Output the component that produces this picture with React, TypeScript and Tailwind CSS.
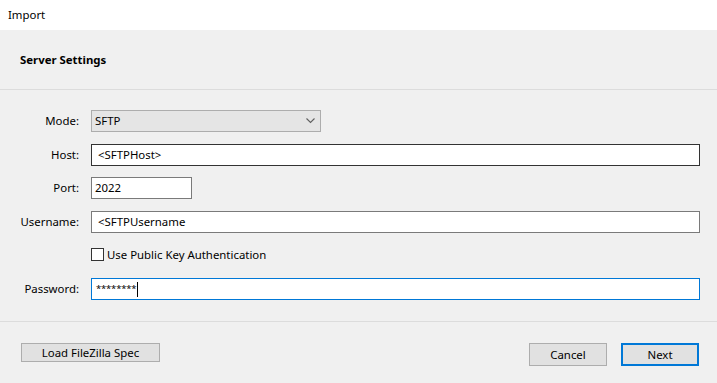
import { FC } from "react";

const font = { fontFamily: '"Segoe UI", "Noto Sans", "Open Sans", sans-serif' };

const Label: FC<{ text: string }> = ({ text }) => (
  <div className="w-[80px] pr-[1px] text-right text-black">{text}</div>
);

const App: FC = () => {
  return (
    <div className="w-[717px] h-[383px] bg-[#f0f0f0] text-[11.4px] text-black overflow-hidden" style={font}>
      {/* title bar */}
      <div className="h-[30px] bg-white flex items-center pl-[8px]">Import</div>

      {/* header */}
      <div className="h-[60px] flex items-center pl-[20px] border-b border-[#dcdcdc] font-bold">
        Server Settings
      </div>

      {/* form */}
      <div className="h-[232px] border-b border-[#dcdcdc] pt-[20px] pr-[17px]">
        <div className="flex items-center gap-[11px] h-[22px]">
          <Label text="Mode:" />
          <div className="w-[230px] h-[22px] bg-[#e5e5e5] border border-[#adadad] flex items-center justify-between pl-[3px] pr-[5px]">
            <span>SFTP</span>
            <svg width="9" height="6" viewBox="0 0 9 6">
              <path d="M0.5 0.5 L4.5 4.5 L8.5 0.5" fill="none" stroke="#606060" strokeWidth="1.1" />
            </svg>
          </div>
        </div>
        <div className="flex items-center gap-[11px] h-[22px] mt-[12px]">
          <Label text="Host:" />
          <div className="flex-1 h-[22px] bg-white border border-[#333] flex items-center pl-[6px]">&lt;SFTPHost&gt;</div>
        </div>
        <div className="flex items-center gap-[11px] h-[22px] mt-[11px]">
          <Label text="Port:" />
          <div className="w-[101px] h-[22px] bg-white border border-[#7a7a7a] flex items-center pl-[3px]">2022</div>
        </div>
        <div className="flex items-center gap-[11px] h-[22px] mt-[12px]">
          <Label text="Username:" />
          <div className="flex-1 h-[22px] bg-white border border-[#7a7a7a] flex items-center pl-[6px]">&lt;SFTPUsername</div>
        </div>
        <div className="flex items-center gap-[11px] h-[20px] mt-[12px]">
          <div className="w-[80px]" />
          <div className="flex items-center gap-[3px]">
            <div className="w-[13px] h-[13px] bg-white border border-[#333]" />
            <span>Use Public Key Authentication</span>
          </div>
        </div>
        <div className="flex items-center gap-[11px] h-[22px] mt-[13px]">
          <Label text="Password:" />
          <div className="flex-1 h-[22px] bg-white border border-[#0078d7] flex items-center pl-[4px]">
            <span className="text-[9.5px] tracking-[-0.2px] leading-none">********</span>
            <span className="w-[1px] h-[15px] bg-black ml-[1px]" />
          </div>
        </div>
      </div>

      {/* footer */}
      <div className="flex items-start pt-[21px] pl-[21px] pr-[18px]">
        <button className="w-[139px] h-[19px] bg-[#e1e1e1] border border-[#adadad] flex items-center justify-center">
          Load FileZilla Spec
        </button>
        <div className="flex-1" />
        <button className="w-[78px] h-[23px] bg-[#e1e1e1] border border-[#adadad] flex items-center justify-center">
          Cancel
        </button>
        <button className="ml-[14px] w-[78px] h-[23px] bg-[#e1e1e1] border-2 border-[#0078d7] flex items-center justify-center">
          Next
        </button>
      </div>
    </div>
  );
};

export default App;
